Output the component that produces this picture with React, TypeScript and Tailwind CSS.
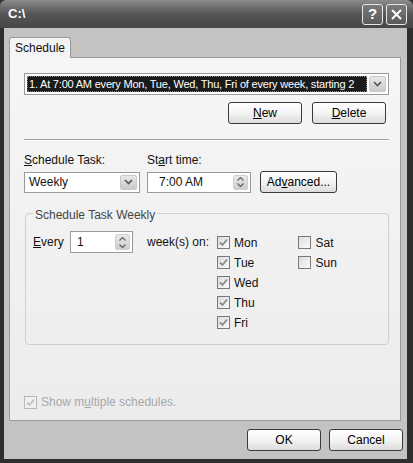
import React from 'react'

const font = { fontFamily: '"Liberation Sans", Arial, sans-serif' }

const Chevron = () => (
  <svg width="9" height="6" viewBox="0 0 9 6">
    <path d="M1 1 L4.5 4.5 L8 1" fill="none" stroke="#555" strokeWidth="1.6" />
  </svg>
)

const DropButton = () => (
  <div className="w-[17px] h-full flex items-center justify-center rounded-[2px] border border-[#c9c9c9] bg-gradient-to-b from-[#e9e9e9] to-[#c9c9c9]">
    <Chevron />
  </div>
)

const SpinButton = () => (
  <div className="w-[15px] h-full flex flex-col rounded-[2px] border border-[#cfcfcf] bg-gradient-to-b from-[#eaeaea] to-[#cdcdcd]">
    <div className="flex-1 flex items-center justify-center">
      <svg width="7" height="4" viewBox="0 0 7 4">
        <path d="M0.5 3.5 L3.5 0.5 L6.5 3.5" fill="none" stroke="#666" strokeWidth="1.3" />
      </svg>
    </div>
    <div className="flex-1 flex items-center justify-center">
      <svg width="7" height="4" viewBox="0 0 7 4">
        <path d="M0.5 0.5 L3.5 3.5 L6.5 0.5" fill="none" stroke="#666" strokeWidth="1.3" />
      </svg>
    </div>
  </div>
)

const Button = ({ children, className = '' }: { children: React.ReactNode; className?: string }) => (
  <div
    className={`w-[74px] h-[22px] flex items-center justify-center rounded-[3px] border border-[#3a3a3a] bg-gradient-to-b from-[#ffffff] via-[#f4f4f4] to-[#dcdcdc] text-[12px] text-black ${className}`}
  >
    {children}
  </div>
)

const Check = ({ checked, disabled = false }: { checked: boolean; disabled?: boolean }) => (
  <div
    className={`w-[13px] h-[13px] flex items-center justify-center border ${
      disabled ? 'border-[#b8b8b8] bg-[#f0f0f0]' : 'border-[#7a7a7a] bg-gradient-to-br from-[#dcdcdc] to-[#fafafa]'
    }`}
  >
    {checked && (
      <svg width="9" height="9" viewBox="0 0 9 9">
        <path
          d="M1 4.5 L3.5 7 L8 1.5"
          fill="none"
          stroke={disabled ? '#c0c0c0' : '#8a8a8a'}
          strokeWidth="1.8"
        />
      </svg>
    )}
  </div>
)

const Day = ({ label, checked }: { label: string; checked: boolean }) => (
  <div className="h-[13px] flex items-center gap-[4px] text-[12px]">
    <Check checked={checked} />
    <span>{label}</span>
  </div>
)

export default function App() {
  return (
    <div className="w-[413px] h-[463px] flex flex-col bg-[#2f2f2f] text-[#111]" style={font}>
      {/* title bar */}
      <div className="h-[28px] flex items-center justify-between pl-[8px] pr-[6px] rounded-t-[6px] bg-gradient-to-b from-[#8c8c8c] via-[#555555] to-[#474747]">
        <span className="text-[13px] font-bold text-white">C:\</span>
        <div className="flex gap-[3px]">
          <div className="w-[21px] h-[21px] flex items-center justify-center rounded-[3px] border border-[#e6e6e6] bg-gradient-to-b from-[#7a7a7a] to-[#5a5a5a] text-white text-[15px] font-bold">
            ?
          </div>
          <div className="w-[21px] h-[21px] flex items-center justify-center rounded-[3px] border border-[#e6e6e6] bg-gradient-to-b from-[#7a7a7a] to-[#5a5a5a]">
            <svg width="11" height="11" viewBox="0 0 11 11">
              <path d="M1 1 L10 10 M10 1 L1 10" stroke="white" strokeWidth="2" />
            </svg>
          </div>
        </div>
      </div>

      {/* body */}
      <div className="flex-1 flex flex-col ml-[4px] mr-[6px] mb-[4px] bg-[#c3c3c3] pl-[5px] pt-[9px]">
        {/* tab */}
        <div className="w-[62px] h-[21px] flex items-center justify-center border border-b-0 border-[#999] rounded-t-[3px] bg-[#f4f4f4] text-[12px] relative z-10 -mb-[1px]">
          Schedule
        </div>

        {/* tab panel */}
        <div className="w-[392px] h-[364px] border border-[#9a9a9a] bg-gradient-to-b from-[#f6f6f6] to-[#ececec] pl-[14px] pt-[15px] flex flex-col text-[12px]">
          {/* schedules combo */}
          <div className="w-[365px] h-[22px] flex items-center border border-[#9a9a9a] bg-white p-[2px] gap-[2px]">
            <div className="flex-1 h-full bg-[#1a1a1a] text-white text-[11px] tracking-[-0.2px] flex items-center pl-[1px] overflow-hidden whitespace-nowrap border border-dotted border-[#888]">
              1. At 7:00 AM every Mon, Tue, Wed, Thu, Fri of every week, starting 2
            </div>
            <DropButton />
          </div>

          <div className="w-[362px] flex justify-end gap-[10px] mt-[7px]">
            <Button>
              <span>
                <u>N</u>ew
              </span>
            </Button>
            <Button>
              <span>
                <u>D</u>elete
              </span>
            </Button>
          </div>

          {/* separator */}
          <div className="w-[365px] mt-[15px] border-t border-[#a0a0a0] border-b border-b-white" />

          {/* schedule task row */}
          <div className="flex mt-[12px] h-[14px] items-center">
            <span className="w-[123px]">
              <u>S</u>chedule Task:
            </span>
            <span>
              St<u>a</u>rt time:
            </span>
          </div>
          <div className="flex mt-[4px] items-center">
            <div className="w-[116px] h-[21px] flex items-center border border-[#9a9a9a] bg-white p-[2px]">
              <span className="flex-1 pl-[2px]">Weekly</span>
              <DropButton />
            </div>
            <div className="ml-[7px] w-[104px] h-[21px] flex items-center border border-[#9a9a9a] bg-white p-[2px]">
              <span className="flex-1 pl-[9px]">7:00 AM</span>
              <SpinButton />
            </div>
            <Button className="ml-[9px] w-[77px]">
              <span>
                Ad<u>v</u>anced...
              </span>
            </Button>
          </div>

          {/* group box */}
          <div className="relative mt-[20px] w-[364px] h-[132px] ml-[1px] border border-[#cfcfcf] rounded-[4px] pl-[7px] pt-[17px]">
            <span className="absolute -top-[8px] left-[7px] px-[2px] bg-[#f1f1f1] text-[#444]">Schedule Task Weekly</span>
            <div className="flex">
              <div className="flex items-center h-[22px]">
                <span className="w-[37px]">
                  <u>E</u>very
                </span>
                <div className="w-[63px] h-[22px] flex items-center border border-[#9a9a9a] bg-white p-[2px]">
                  <span className="flex-1 pl-[4px]">1</span>
                  <SpinButton />
                </div>
                <span className="ml-[14px] w-[70px]">week(s) on:</span>
              </div>
              <div className="flex flex-col gap-[7px] pt-[5px]">
                <Day label="Mon" checked />
                <Day label="Tue" checked />
                <Day label="Wed" checked />
                <Day label="Thu" checked />
                <Day label="Fri" checked />
              </div>
              <div className="flex flex-col gap-[7px] pt-[5px] ml-[40px]">
                <Day label="Sat" checked={false} />
                <Day label="Sun" checked={false} />
              </div>
            </div>
          </div>

          {/* show multiple */}
          <div className="flex items-center gap-[4px] mt-[48px] text-[#a8a8a8]">
            <Check checked disabled />
            <span>
              Show m<u>u</u>ltiple schedules.
            </span>
          </div>
        </div>

        {/* bottom buttons */}
        <div className="w-[394px] flex justify-end gap-[8px] mt-[8px]">
          <Button>OK</Button>
          <Button>Cancel</Button>
        </div>
      </div>
    </div>
  )
}
